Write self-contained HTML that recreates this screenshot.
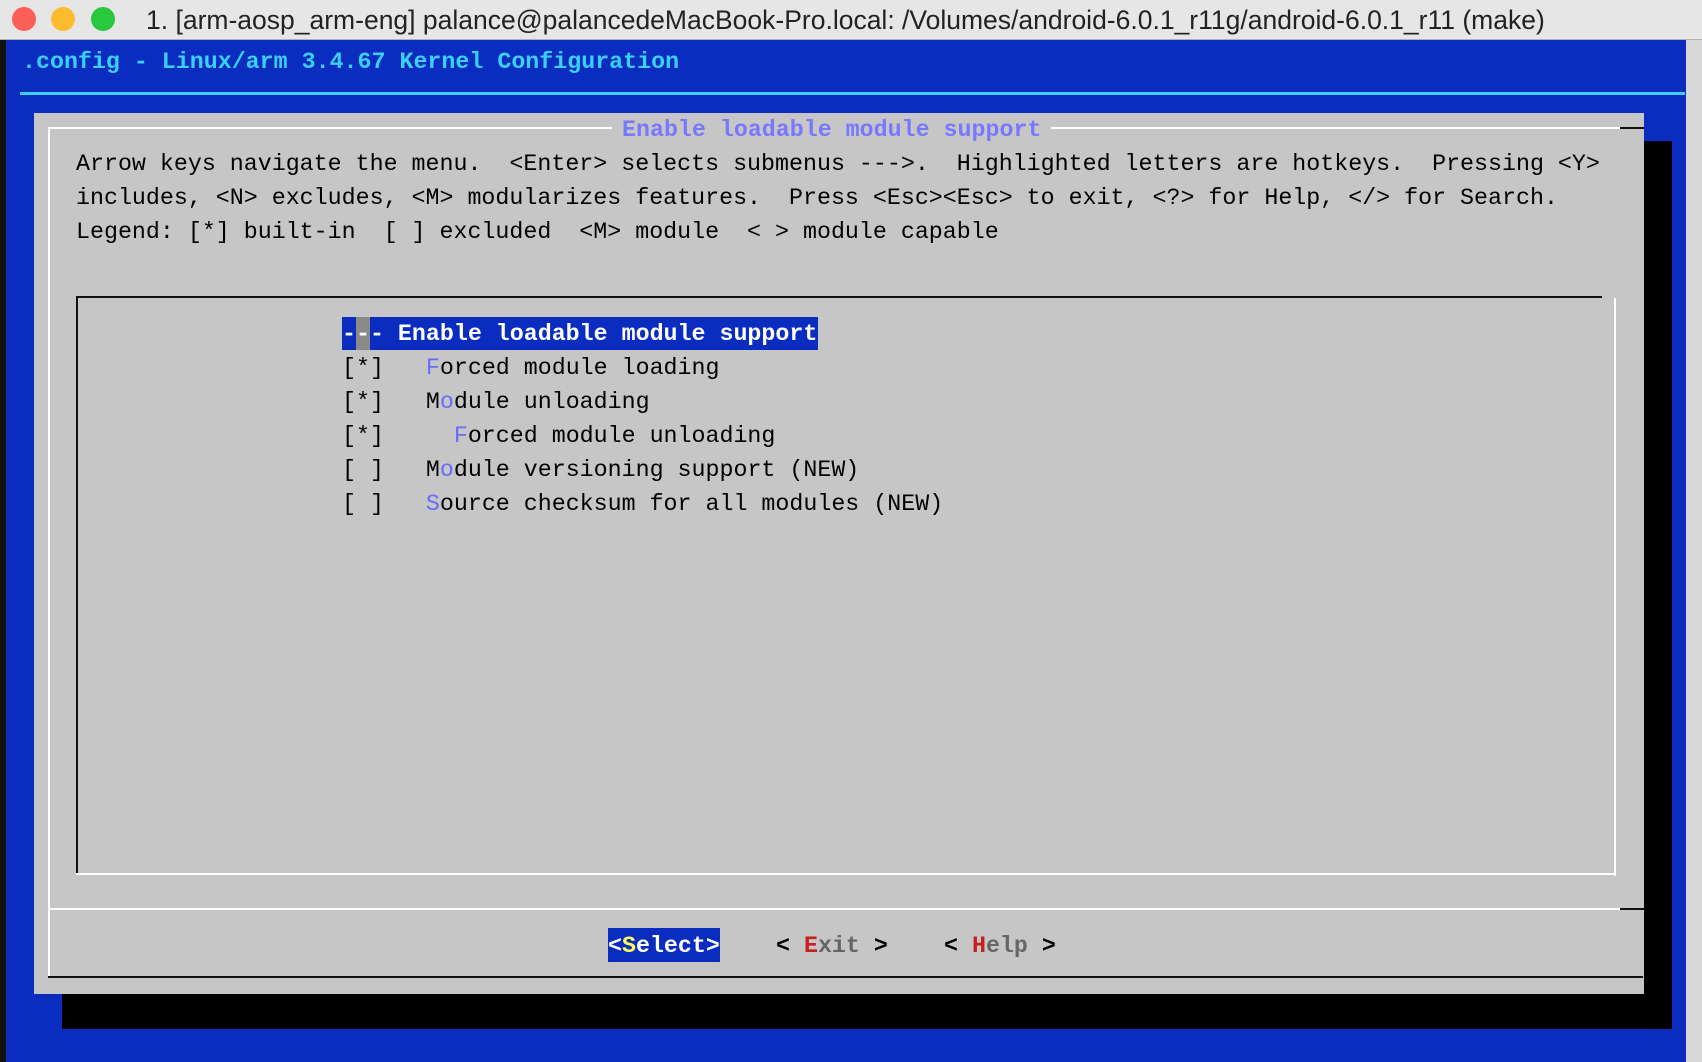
<!DOCTYPE html>
<html><head><meta charset="utf-8"><style>
*{margin:0;padding:0;box-sizing:border-box}
body{width:1702px;height:1062px;overflow:hidden;background:#0a2cbf;position:relative;font-family:"Liberation Mono","DejaVu Sans Mono",monospace;}
.t{position:absolute;white-space:pre;font-size:23.3px;line-height:34px;height:34px;color:#000;}
.b{font-weight:bold}
.a{position:absolute}
.hk{color:#6a6aff}
</style></head><body>
<div class="a" style="left:0;top:0;width:1702px;height:40px;background:#e6e6e6;border-bottom:1px solid #b0b0b0"></div>
<div class="a" style="left:12px;top:7px;width:24px;height:24px;border-radius:50%;background:#fc5f57"></div>
<div class="a" style="left:51px;top:7px;width:24px;height:24px;border-radius:50%;background:#fdbc2e"></div>
<div class="a" style="left:91px;top:7px;width:24px;height:24px;border-radius:50%;background:#28c83f"></div>
<div class="a" style="left:146px;top:3px;font-family:'Liberation Sans',sans-serif;font-size:26.5px;color:#222;white-space:pre;line-height:34px">1. [arm-aosp_arm-eng] palance@palancedeMacBook-Pro.local: /Volumes/android-6.0.1_r11g/android-6.0.1_r11 (make)</div>
<div class="a" style="left:0;top:40px;width:6px;height:1022px;background:#111"></div>
<div class="a" style="left:1686px;top:40px;width:16px;height:1022px;background:#d8d8d8"></div>
<div class="t b" style="left:22px;top:45px;color:#3ad0ff">.config - Linux/arm 3.4.67 Kernel Configuration</div>
<div class="a" style="left:20px;top:92px;width:1665px;height:3px;background:#3ad0ff"></div>
<div class="a" style="left:62px;top:141px;width:1610px;height:888px;background:#000"></div>
<div class="a" style="left:34px;top:113px;width:1610px;height:881px;background:#c6c6c6"></div>
<div class="a" style="left:48px;top:127px;width:1595px;height:2px;background:#fff"></div>
<div class="a" style="left:48px;top:127px;width:2px;height:850px;background:#fff"></div>
<div class="a" style="left:1620px;top:127px;width:24px;height:2px;background:#111"></div>
<div class="a" style="left:48px;top:976px;width:1595px;height:2px;background:#111"></div>
<div class="a" style="left:48px;top:908px;width:1595px;height:2px;background:#fff"></div>
<div class="a" style="left:1620px;top:908px;width:24px;height:2px;background:#111"></div>
<div class="t b" style="left:612px;top:113px;color:#7878ff;background:#c6c6c6;padding:0 10px">Enable loadable module support</div>
<div class="t" style="left:76px;top:147px">Arrow keys navigate the menu.  &lt;Enter&gt; selects submenus ---&gt;.  Highlighted letters are hotkeys.  Pressing &lt;Y&gt;</div>
<div class="t" style="left:76px;top:181px">includes, &lt;N&gt; excludes, &lt;M&gt; modularizes features.  Press &lt;Esc&gt;&lt;Esc&gt; to exit, &lt;?&gt; for Help, &lt;/&gt; for Search.</div>
<div class="t" style="left:76px;top:215px">Legend: [*] built-in  [ ] excluded  &lt;M&gt; module  &lt; &gt; module capable</div>
<div class="a" style="left:76px;top:296px;width:1526px;height:2px;background:#111"></div>
<div class="a" style="left:76px;top:296px;width:2px;height:578px;background:#111"></div>
<div class="a" style="left:1614px;top:298px;width:2px;height:578px;background:#fff"></div>
<div class="a" style="left:76px;top:873px;width:1540px;height:2px;background:#fff"></div>
<div class="a" style="left:342px;top:317px;width:476px;height:33px;background:#0a2cbf"></div>
<div class="a" style="left:356px;top:317px;width:14px;height:33px;background:#8a8a8a"></div>
<div class="t b" style="left:342px;top:317px;color:#fff">--- Enable loadable module support</div>
<div class="t" style="left:342px;top:351px">[*]   <span class="hk">F</span>orced module loading</div>
<div class="t" style="left:342px;top:385px">[*]   M<span class="hk">o</span>dule unloading</div>
<div class="t" style="left:342px;top:419px">[*]     <span class="hk">F</span>orced module unloading</div>
<div class="t" style="left:342px;top:453px">[ ]   M<span class="hk">o</span>dule versioning support (NEW)</div>
<div class="t" style="left:342px;top:487px">[ ]   <span class="hk">S</span>ource checksum for all modules (NEW)</div>
<div class="a" style="left:608px;top:928px;width:112px;height:34px;background:#0a2cbf"></div>
<div class="t b" style="left:608px;top:929px;color:#fff">&lt;<span style="color:#ffff55">S</span>elect&gt;</div>
<div class="t b" style="left:776px;top:929px;color:#666"><span style="color:#000">&lt;</span> <span style="color:#c81e1e">E</span>xit <span style="color:#000">&gt;</span></div>
<div class="t b" style="left:944px;top:929px;color:#666"><span style="color:#000">&lt;</span> <span style="color:#c81e1e">H</span>elp <span style="color:#000">&gt;</span></div>
</body></html>
